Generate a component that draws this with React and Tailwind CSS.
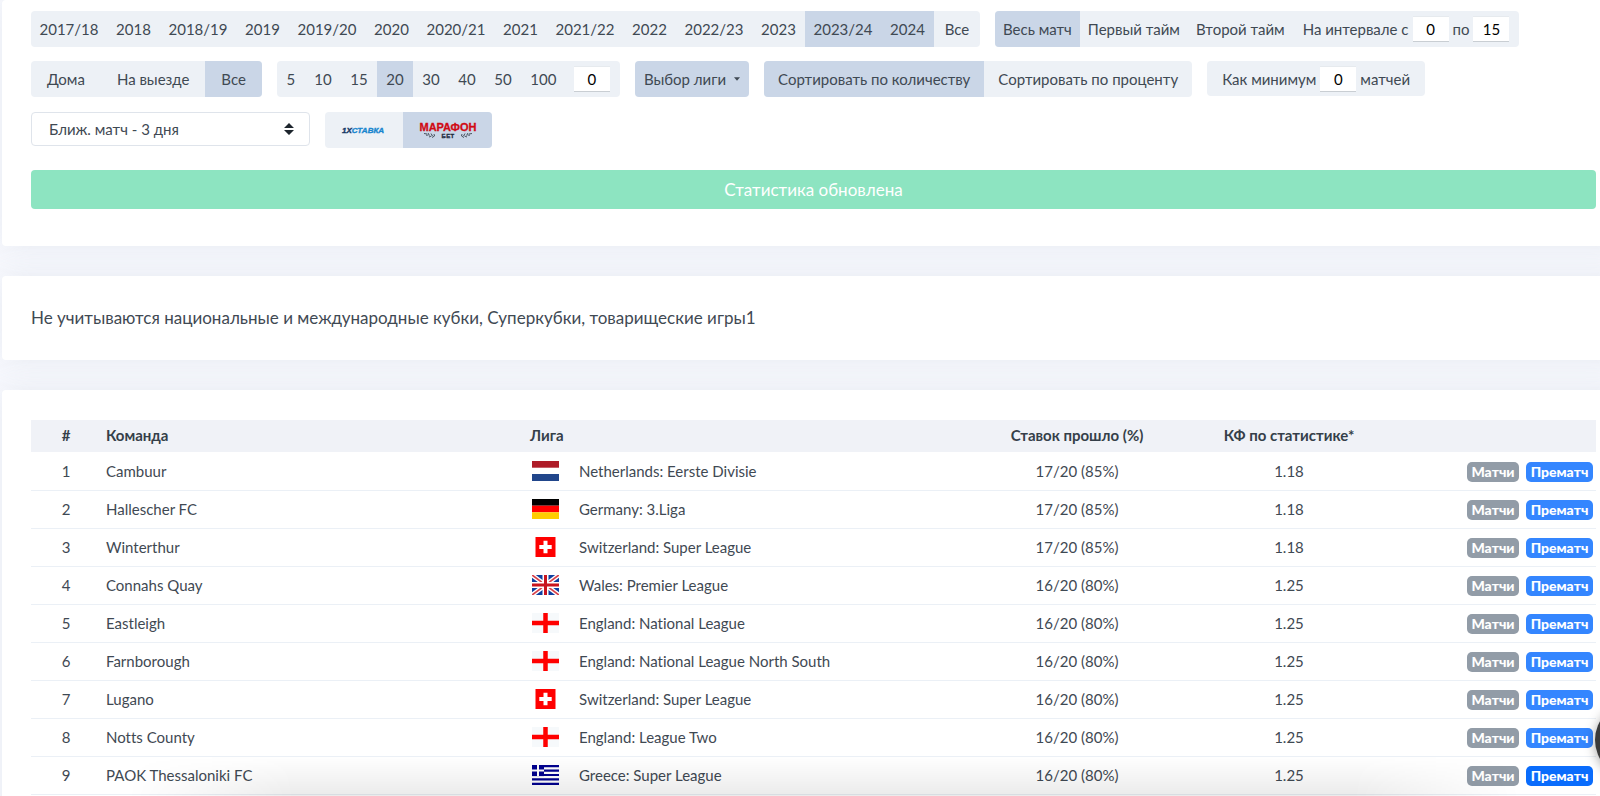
import React, { useState } from 'react'
import clsx from 'clsx'

const YEARS = ['2017/18', '2018', '2018/19', '2019', '2019/20', '2020', '2020/21', '2021',
  '2021/22', '2022', '2022/23', '2023', '2023/24', '2024']
const COUNTS = ['5', '10', '15', '20', '30', '40', '50', '100']

const ROWS = [
  { team:'Cambuur',              flag:'nl', league:'Netherlands: Eerste Divisie',          hit:'17/20 (85%)', kf:'1.18' },
  { team:'Hallescher FC',        flag:'de', league:'Germany: 3.Liga',                      hit:'17/20 (85%)', kf:'1.18' },
  { team:'Winterthur',           flag:'ch', league:'Switzerland: Super League',            hit:'17/20 (85%)', kf:'1.18' },
  { team:'Connahs Quay',         flag:'gb', league:'Wales: Premier League',                hit:'16/20 (80%)', kf:'1.25' },
  { team:'Eastleigh',            flag:'en', league:'England: National League',             hit:'16/20 (80%)', kf:'1.25' },
  { team:'Farnborough',          flag:'en', league:'England: National League North South', hit:'16/20 (80%)', kf:'1.25' },
  { team:'Lugano',               flag:'ch', league:'Switzerland: Super League',            hit:'16/20 (80%)', kf:'1.25' },
  { team:'Notts County',         flag:'en', league:'England: League Two',                  hit:'16/20 (80%)', kf:'1.25' },
  { team:'PAOK Thessaloniki FC', flag:'gr', league:'Greece: Super League',                 hit:'16/20 (80%)', kf:'1.25' },
]

const FLAGS = {
  nl: (
    <>
      <rect width="27" height="20" fill="#fff" />
      <rect width="27" height="6.7" fill="#ae1c28" />
      <rect y="13" width="27" height="7" fill="#21468b" />
    </>
  ),
  de: (
    <>
      <rect width="27" height="6.7" fill="#000" />
      <rect y="6.7" width="27" height="6.6" fill="#f00" />
      <rect y="13.3" width="27" height="6.7" fill="#fc0" />
    </>
  ),
  ch: (
    <>
      <rect x="3.5" width="20" height="20" fill="#f00" />
      <path d="M11.5 3.8h4v4.2h4.2v4h-4.2v4.2h-4v-4.2H7.3v-4h4.2z" fill="#fff" />
    </>
  ),
  gb: (
    <>
      <rect width="27" height="20" fill="#0e3fa0" />
      <path d="M0 0L27 20M27 0L0 20" stroke="#fff" strokeWidth="4.5" />
      <path d="M0 0L27 20M27 0L0 20" stroke="#d8434c" strokeWidth="1.8" />
      <path d="M13.5 0V20M0 10H27" stroke="#fff" strokeWidth="6" />
      <path d="M13.5 0V20M0 10H27" stroke="#c8141e" strokeWidth="3" />
    </>
  ),
  en: (
    <>
      <rect width="27" height="20" fill="#f6f9fb" />
      <path d="M13.5 0V20M0 10H27" stroke="#f00" strokeWidth="4.5" />
    </>
  ),
  gr: (
    <>
      <rect width="27" height="20" fill="#fff" />
      <path d="M0 1.1H27M0 5.55H27M0 10H27M0 14.45H27M0 18.9H27" stroke="#00008f" strokeWidth="2.2" />
      <rect width="12" height="11.1" fill="#00008f" />
      <path d="M6 0V11.1M0 5.55H12" stroke="#fff" strokeWidth="2" />
    </>
  ),
}

function Flag({ code }) {
  return (
    <svg viewBox="0 0 27 20" className="h-5 w-[27px] shrink-0 overflow-hidden" aria-hidden="true">
      {FLAGS[code]}
    </svg>
  )
}

function Group({ children, className }) {
  return (
    <div className={clsx('flex h-9 items-stretch overflow-hidden rounded-[4px] bg-[#edf1f6]', className)}>
      {children}
    </div>
  )
}

function Toggle({ active, className, children, ...rest }) {
  return (
    <button
      type="button"
      aria-pressed={active}
      className={clsx('flex items-center justify-center whitespace-nowrap', active && 'bg-[#cad6e7]', className)}
      {...rest}
    >
      {children}
    </button>
  )
}

function NumberBox({ value, label }) {
  return (
    <input
      type="text"
      defaultValue={value}
      aria-label={label}
      className="h-[26px] w-9 border-t border-b border-t-[#e6eaee] border-b-[#c9ced3] bg-white text-center text-black outline-none"
    />
  )
}

function XStavka() {
  return (
    <svg viewBox="0 0 46 12" className="h-3 w-[46px]" role="img" aria-label="1XСТАВКА">
      <text x="1" y="9" className="font-['Liberation_Sans',sans-serif] text-[8px] font-bold italic" fill="#1a86cf" stroke="#1a86cf" strokeWidth="0.4">
        <tspan fill="#173a68" stroke="#173a68">1X</tspan>СТАВКА
      </text>
    </svg>
  )
}

function Marathon() {
  return (
    <svg viewBox="0 0 60 18" className="h-[18px] w-[60px]" role="img" aria-label="МАРАФОН БЕТ">
      <text x="30" y="10" textAnchor="middle" fill="#d00a14" stroke="#d00a14" strokeWidth="0.3" className="font-['Liberation_Sans',sans-serif] text-[11px] font-bold">МАРАФОН</text>
      <text x="30" y="17" textAnchor="middle" fill="#1d2a3c" stroke="#1d2a3c" strokeWidth="0.3" className="font-['Liberation_Sans',sans-serif] text-[6px] font-bold tracking-wider">БЕТ</text>
      <g fill="none" stroke="#3a4450" strokeWidth="0.9">
        <path d="M6 12.5l3 .5M8 14.2l2.500-.2M10 12l1.500 2.500M11 16l2.500-1M13 12.500l1.500 2.500M14 16.500l2.500-1.500M16 13l.500 2" />
        <path d="M54 12.5l-3 .5M52 14.2l-2.500-.2M50 12l-1.500 2.500M49 16l-2.500-1M47 12.500l-1.500 2.500M46 16.500l-2.500-1.500M44 13l-.500 2" />
      </g>
    </svg>
  )
}

function Card({ children, className }) {
  return (
    <section className={clsx('rounded-[4px] bg-white shadow-[0_0_32px_rgba(136,152,170,0.15)]', className)}>
      {children}
    </section>
  )
}

export default function App() {
  const [years, setYears] = useState(['2023/24', '2024'])
  const [half, setHalf] = useState('Весь матч')
  const [place, setPlace] = useState('Все')
  const [count, setCount] = useState('20')
  const [sort, setSort] = useState('количеству')
  const [book, setBook] = useState('marathon')

  const toggleYear = (y) => setYears(list => list.includes(y) ? list.filter(v => v !== y) : [...list, y])

  return (
    <div className="relative h-screen overflow-hidden bg-[#f8f9fe] font-['Lato','Noto_Sans',sans-serif] text-[15px] leading-5 text-[#3f4953] [font-variant-ligatures:none]">
      {/* cards run past the right edge of the window */}
      <div className="-mr-[25px] ml-0.5 flex flex-col gap-[30px]">
        <Card className="px-[29px] pt-[11px] pb-[37px]">
          <div className="flex flex-wrap gap-[15px]">
            <Group>
              {YEARS.map(y => (
                <Toggle
                  key={y}
                  active={years.includes(y)}
                  onClick={() => toggleYear(y)}
                  className={y.length > 4 ? 'w-[76px]' : 'w-[53px]'}
                >
                  {y}
                </Toggle>
              ))}
              <Toggle className="w-[46px]" active={false}>Все</Toggle>
            </Group>
            <Group className="pr-2.5">
              {['Весь матч', 'Первый тайм', 'Второй тайм'].map(h => (
                <Toggle key={h} active={half === h} onClick={() => setHalf(h)} className="px-2">{h}</Toggle>
              ))}
              <div className="flex items-center gap-1 pl-2.5">
                <span>На интервале с</span>
                <NumberBox value="0" label="Начало интервала" />
                <span>по</span>
                <NumberBox value="15" label="Конец интервала" />
              </div>
            </Group>
          </div>

          <div className="mt-[14px] flex flex-wrap gap-[15px]">
            <Group>
              {['Дома', 'На выезде', 'Все'].map(p => (
                <Toggle key={p} active={place === p} onClick={() => setPlace(p)} className="px-4">{p}</Toggle>
              ))}
            </Group>
            <Group className="pr-2.5">
              {COUNTS.map(c => (
                <Toggle
                  key={c}
                  active={count === c}
                  onClick={() => setCount(c)}
                  className={clsx(c.length === 1 && 'w-7', c.length === 2 && 'w-9', c.length === 3 && 'w-[45px]')}
                >
                  {c}
                </Toggle>
              ))}
              <div className="flex items-center pl-2"><NumberBox value="0" label="Количество матчей" /></div>
            </Group>
            <button type="button" className="flex h-9 items-center gap-2 rounded-[4px] bg-[#cad6e7] px-[9px]">
              Выбор лиги
              <svg viewBox="0 0 6 4" className="h-1 w-1.5" aria-hidden="true"><path d="M0 .3h6L3 3.7z" fill="currentColor" /></svg>
            </button>
            <Group>
              {['количеству', 'проценту'].map(s => (
                <Toggle key={s} active={sort === s} onClick={() => setSort(s)} className="px-[14px]">Сортировать по {s}</Toggle>
              ))}
            </Group>
            <div className="flex h-[35px] items-center gap-1 rounded-[4px] bg-[#edf1f6] px-[15px]">
              <span>Как минимум</span>
              <NumberBox value="0" label="Как минимум матчей" />
              <span>матчей</span>
            </div>
          </div>

          <div className="mt-[15px] flex flex-wrap gap-[15px]">
            <div className="relative">
              <select
                aria-label="Ближайший матч"
                className="h-[34px] w-[279px] appearance-none rounded-[4px] border border-[#dfe4eb] bg-white pr-8 pl-[17px] outline-none"
              >
                <option>Ближ. матч - 3 дня</option>
              </select>
              <svg viewBox="0 0 10 12" className="pointer-events-none absolute top-[11px] right-4 h-3 w-2.5" aria-hidden="true">
                <path d="M5 0l5 5H0zM0 7h10l-5 5z" fill="#1d252d" />
              </svg>
            </div>
            <Group>
              <Toggle active={book === '1x'} onClick={() => setBook('1x')} className="w-[78px]"><XStavka /></Toggle>
              <Toggle active={book === 'marathon'} onClick={() => setBook('marathon')} className="w-[89px]"><Marathon /></Toggle>
            </Group>
          </div>

          <div className="mt-[22px] flex h-[39px] items-center justify-center rounded-[4px] bg-[#8de4c1] text-[17px] text-white">
            Статистика обновлена
          </div>
        </Card>

        <Card className="px-[29px] py-[30px] text-[17px] leading-6">
          Не учитываются национальные и международные кубки, Суперкубки, товарищеские игры1
        </Card>

        <Card className="px-[29px] py-[30px]">
          <table className="w-full table-fixed border-collapse">
            <thead>
              <tr className="h-8 bg-[#f0f2f7] text-[#353f49]">
                <th className="w-[70px] pb-0.5">#</th>
                <th className="w-[424px] pb-0.5 pl-[5px] text-left">Команда</th>
                <th className="pb-0.5 pl-[5px] text-left">Лига</th>
                <th className="w-[224px] pb-0.5">Ставок прошло (%)</th>
                <th className="w-[200px] pb-0.5">КФ по статистике*</th>
                <th className="w-[207px] pb-0.5" aria-label="Ссылки" />
              </tr>
            </thead>
            <tbody>
              {ROWS.map((r, i) => (
                <tr key={r.team} className="h-[38px] border-b border-[#ebf0f6]">
                  <td className="text-center">{i + 1}</td>
                  <td className="pl-[5px]">{r.team}</td>
                  <td className="pl-[7px]">
                    <div className="flex items-center gap-5">
                      <Flag code={r.flag} />
                      <span>{r.league}</span>
                    </div>
                  </td>
                  <td className="text-center">{r.hit}</td>
                  <td className="text-center">{r.kf}</td>
                  <td className="pt-0.5">
                    <div className="flex justify-end gap-[7px] pr-[3px] text-[14px] font-black text-white">
                      <a href="#matches" className="flex h-5 w-[52px] items-center justify-center rounded-[5px] bg-[#929ca7]">Матчи</a>
                      <a
                        href="#prematch"
                        className={clsx('flex h-5 w-[67px] items-center justify-center rounded-[5px]',
                          i === ROWS.length - 1 ? 'bg-[#0a6cfc]' : 'bg-[#3486ff]')}
                      >
                        Прематч
                      </a>
                    </div>
                  </td>
                </tr>
              ))}
            </tbody>
          </table>
        </Card>
      </div>

      {/* soft shade cast over the bottom of the page */}
      <div className="pointer-events-none absolute right-20 bottom-0 left-32 h-10 bg-linear-to-b from-transparent to-black/8 [mask-image:linear-gradient(to_right,transparent,black_12%,black_88%,transparent)]" />
      <button
        type="button"
        aria-label="Чат"
        className="absolute -right-[71px] bottom-[18px] size-[76px] rounded-full bg-[#3a3a3a] shadow-[0_2px_12px_rgba(0,0,0,0.35)]"
      />
    </div>
  )
}
